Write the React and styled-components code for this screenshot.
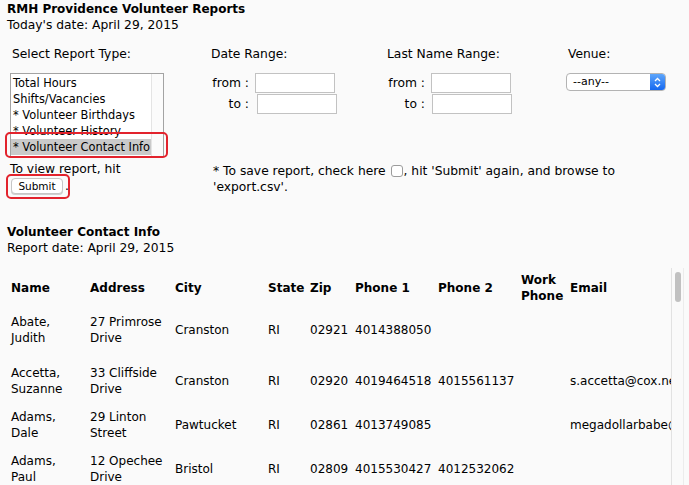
import styled, { createGlobalStyle } from "styled-components";

const GlobalStyle = createGlobalStyle`
  html, body {
    margin: 0;
    padding: 0;
    overflow: hidden;
    background: #fafafa;
  }
  body {
    font-family: "DejaVu Sans", Verdana, sans-serif;
    font-size: 12px;
    line-height: 16px;
    color: #000;
  }
`;

const reportTypes = [
  "Total Hours",
  "Shifts/Vacancies",
  "* Volunteer Birthdays",
  "* Volunteer History",
  "* Volunteer Contact Info",
];

const volunteers = [
  {
    name: "Abate, Judith",
    address: "27 Primrose Drive",
    city: "Cranston",
    state: "RI",
    zip: "02921",
    phone1: "4014388050",
    phone2: "",
    work: "",
    email: "",
    gap: true,
  },
  {
    name: "Accetta, Suzanne",
    address: "33 Cliffside Drive",
    city: "Cranston",
    state: "RI",
    zip: "02920",
    phone1: "4019464518",
    phone2: "4015561137",
    work: "",
    email: "s.accetta@cox.net",
  },
  {
    name: "Adams, Dale",
    address: "29 Linton Street",
    city: "Pawtucket",
    state: "RI",
    zip: "02861",
    phone1: "4013749085",
    phone2: "",
    work: "",
    email: "megadollarbabe@gmail.com",
  },
  {
    name: "Adams, Paul",
    address: "12 Opechee Drive",
    city: "Bristol",
    state: "RI",
    zip: "02809",
    phone1: "4015530427",
    phone2: "4012532062",
    work: "",
    email: "",
  },
];

const columns = [
  { key: "name", label: "Name", width: 79 },
  { key: "address", label: "Address", width: 85 },
  { key: "city", label: "City", width: 93 },
  { key: "state", label: "State", width: 42 },
  { key: "zip", label: "Zip", width: 45 },
  { key: "phone1", label: "Phone 1", width: 83 },
  { key: "phone2", label: "Phone 2", width: 83 },
  { key: "work", label: "Work Phone", width: 49, tight: true },
  { key: "email", label: "Email", width: 240 },
];

export default function App() {
  return (
    <>
      <GlobalStyle />
      <Page>
        <Title>RMH Providence Volunteer Reports</Title>
        <Para>Today's date: April 29, 2015</Para>

        <Form>
          <Label $pad={5}>Select Report Type:</Label>
          <Label>Date Range:</Label>
          <Label>Last Name Range:</Label>
          <Label $pad={2}>Venue:</Label>

          <ListWrap>
            <ListBox>
              <ListItems>
                {reportTypes.map((t, i) => (
                  <ListItem key={t} $selected={i === reportTypes.length - 1}>
                    {t}
                  </ListItem>
                ))}
              </ListItems>
              <ListTrack />
            </ListBox>
            <Highlight $left={-5} $top={59} $w={163} $h={26} />
          </ListWrap>

          <RangeGrid>
            <RangeLabel>from :</RangeLabel>
            <TextBox />
            <RangeLabel>to :</RangeLabel>
            <TextBox $shift={2} />
          </RangeGrid>

          <RangeGrid>
            <RangeLabel>from :</RangeLabel>
            <TextBox />
            <RangeLabel>to :</RangeLabel>
            <TextBox $shift={1} />
          </RangeGrid>

          <div>
            <Select>
              <span>--any--</span>
              <Stepper>
                <svg width="7" height="11" viewBox="0 0 7 11">
                  <path
                    d="M1 4 L3.5 1.5 L6 4 M1 7 L3.5 9.5 L6 7"
                    fill="none"
                    stroke="#fff"
                    strokeWidth="1.3"
                  />
                </svg>
              </Stepper>
            </Select>
          </div>

          <ViewNote>
            To view report, hit
            <br />
            <SubmitWrap>
              <SubmitButton type="button">Submit</SubmitButton>.
              <Highlight $left={-4} $top={-4} $w={64} $h={25} />
            </SubmitWrap>
          </ViewNote>

          <SaveNote>
            * To save report, check here <CheckBox />, hit 'Submit' again, and
            browse to 'export.csv'.
          </SaveNote>
        </Form>

        <ReportTitle>Volunteer Contact Info</ReportTitle>
        <Para>Report date: April 29, 2015</Para>

        <ReportFrame>
          <TableViewport>
            <Table>
              <colgroup>
                {columns.map((c) => (
                  <col key={c.key} style={{ width: c.width }} />
                ))}
              </colgroup>
              <thead>
                <tr>
                  {columns.map((c) => (
                    <Th key={c.key} $tight={c.tight}>
                      {c.label}
                    </Th>
                  ))}
                </tr>
              </thead>
              <tbody>
                {volunteers.map((v) => (
                  <tr key={v.name}>
                    {columns.map((c) => (
                      <Td key={c.key} $gap={v.gap} $tight={c.tight}>
                        {v[c.key]}
                      </Td>
                    ))}
                  </tr>
                ))}
              </tbody>
            </Table>
          </TableViewport>
          <ScrollTrack>
            <ScrollThumb />
          </ScrollTrack>
        </ReportFrame>
      </Page>
    </>
  );
}

const Page = styled.div`
  padding: 1px 5px 0 7px;
`;

const Title = styled.div`
  font-weight: bold;
`;

const Para = styled.div`
  font-size: 12.3px;
`;

const Form = styled.div`
  display: grid;
  grid-template-columns: 204px 176px 179px 1fr;
  margin-top: 13px;
  align-items: start;
`;

const Label = styled.div`
  padding-left: ${(p) => p.$pad || 0}px;
  margin-bottom: 11px;
  font-size: 12.3px;
`;

const ListWrap = styled.div`
  position: relative;
  margin-left: 3px;
  width: 154px;
`;

const ListBox = styled.div`
  display: flex;
  height: 82px;
  border: 1px solid #a3a3a3;
  background: #fff;
  font-size: 11.4px;
  overflow: hidden;
`;

const ListItems = styled.div`
  flex: 1;
  padding-top: 1px;
`;

const ListItem = styled.div`
  height: 16px;
  line-height: 16px;
  padding-left: 2px;
  white-space: nowrap;
  background: ${(p) => (p.$selected ? "#cacaca" : "transparent")};
`;

const ListTrack = styled.div`
  width: 11px;
  border-left: 1px solid #e4e4e4;
  background: #fbfbfb;
`;

const Highlight = styled.div`
  position: absolute;
  left: ${(p) => p.$left}px;
  top: ${(p) => p.$top}px;
  width: ${(p) => p.$w}px;
  height: ${(p) => p.$h}px;
  box-sizing: border-box;
  border: 2px solid #e2232d;
  border-radius: 5px;
  pointer-events: none;
`;

const RangeGrid = styled.div`
  display: grid;
  grid-template-columns: 44px 82px;
  row-gap: 1px;
  align-items: center;
  font-size: 12.3px;
`;

const RangeLabel = styled.span`
  text-align: right;
  padding-right: 6px;
`;

const TextBox = styled.div`
  width: 80px;
  height: 20px;
  box-sizing: border-box;
  border: 1px solid #c2c2c2;
  background: #fff;
  margin-left: ${(p) => p.$shift || 0}px;
`;

const Select = styled.div`
  display: flex;
  align-items: center;
  justify-content: space-between;
  width: 100px;
  height: 18px;
  box-sizing: border-box;
  border: 1px solid #b3b3b3;
  border-radius: 4px;
  background: #fff;
  font-size: 11px;
  padding-left: 6px;
  overflow: hidden;
`;

const Stepper = styled.span`
  display: flex;
  align-items: center;
  justify-content: center;
  width: 15px;
  height: 100%;
  background: linear-gradient(#5ea6fb, #1668f0);
`;

const ViewNote = styled.div`
  margin-top: 4px;
  padding-left: 3px;
  font-size: 12.3px;
`;

const SubmitWrap = styled.span`
  position: relative;
  display: inline-block;
  margin-top: 1px;
`;

const SubmitButton = styled.button`
  font-family: "DejaVu Sans", Verdana, sans-serif;
  font-size: 10.5px;
  line-height: 14px;
  height: 16px;
  width: 52px;
  padding: 0;
  margin: 0 2px 0 1px;
  border: 1px solid #c6c6c6;
  border-radius: 4px;
  background: #fff;
  color: #000;
  box-shadow: 0 1px 0 #d0d0d0;
  vertical-align: top;
`;

const SaveNote = styled.div`
  grid-column: 2 / 5;
  max-width: 420px;
  margin-top: 6px;
  padding-left: 2px;
  font-size: 12.3px;
`;

const CheckBox = styled.span`
  display: inline-block;
  width: 12px;
  height: 12px;
  box-sizing: border-box;
  border: 1px solid #9c9c9c;
  border-radius: 3px;
  background: #fff;
  vertical-align: -2px;
  margin: 0 1px;
`;

const ReportTitle = styled.div`
  font-weight: bold;
  margin-top: 29px;
`;

const ReportFrame = styled.div`
  display: flex;
  margin-top: 12px;
  height: 217px;
`;

const TableViewport = styled.div`
  flex: 1;
  min-width: 0;
  overflow: hidden;
`;

const ScrollTrack = styled.div`
  width: 13px;
  flex: none;
  border-left: 1px solid #e2e2e2;
  border-right: 1px solid #ececec;
  background: #fafafa;
  padding: 4px 2px 0 3px;
  box-sizing: border-box;
`;

const ScrollThumb = styled.div`
  height: 30px;
  border-radius: 4px;
  background: #c1c1c1;
`;

const Table = styled.table`
  table-layout: fixed;
  border-collapse: collapse;
  width: 799px;
`;

const Th = styled.th`
  text-align: left;
  vertical-align: middle;
  height: 40px;
  padding: 0 ${(p) => (p.$tight ? 0 : 4)}px 0 4px;
  font-weight: bold;
  overflow: hidden;
`;

const Td = styled.td`
  vertical-align: middle;
  height: 44px;
  padding: 0 ${(p) => (p.$tight ? 0 : 4)}px ${(p) => (p.$gap ? 7 : 0)}px 4px;
  white-space: ${(p) => (p.$tight ? "nowrap" : "normal")};
  overflow: hidden;
`;
